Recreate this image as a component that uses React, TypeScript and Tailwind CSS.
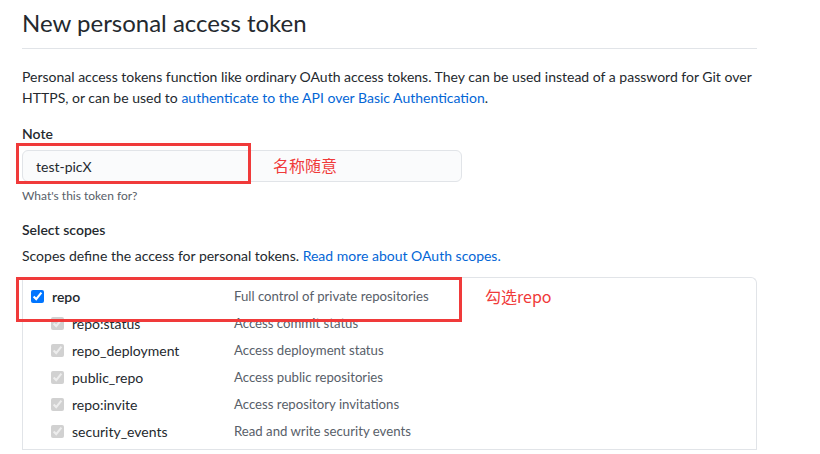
import React from "react";

type Scope = { name: string; desc: string; sub?: boolean };

const scopes: Scope[] = [
  { name: "repo", desc: "Full control of private repositories" },
  { name: "repo:status", desc: "Access commit status", sub: true },
  { name: "repo_deployment", desc: "Access deployment status", sub: true },
  { name: "public_repo", desc: "Access public repositories", sub: true },
  { name: "repo:invite", desc: "Access repository invitations", sub: true },
  { name: "security_events", desc: "Read and write security events", sub: true },
];

const ScopeRow: React.FC<{ scope: Scope }> = ({ scope }) => (
  <div className="flex items-center h-[27px]">
    <label className={`flex items-center w-[203px] ${scope.sub ? "pl-[20px]" : ""}`}>
      <input
        type="checkbox"
        checked
        readOnly
        disabled={scope.sub}
        className="m-0 w-[13px] h-[13px] mr-[8px]"
      />
      <span className={scope.sub ? "text-[#24292e]" : "font-semibold text-[#24292e]"}>
        {scope.name}
      </span>
    </label>
    <span className="text-[#586069] text-[13.2px]">{scope.desc}</span>
  </div>
);

export default function App() {
  return (
    <div
      className="relative w-[820px] h-[454px] overflow-hidden bg-white text-[14px] text-[#24292e]"
      style={{ fontFamily: '"Segoe UI", Lato, "Noto Sans CJK SC", sans-serif' }}
    >
      <div className="ml-[22px] w-[735px] flex flex-col">
        <div className="h-[49px] flex items-end border-b border-[#e1e4e8]">
          <h1 className="text-[24px] leading-[36px] font-normal mb-[7px]">
            New personal access token
          </h1>
        </div>

        <p className="mt-[17px] leading-[21px]">
          Personal access tokens function like ordinary OAuth access tokens. They can be used
          instead of a password for Git over HTTPS, or can be used to{" "}
          <a className="text-[#0366d6]">authenticate to the API over Basic Authentication</a>.
        </p>

        <div className="mt-[15px] font-semibold leading-[21px]">Note</div>
        <div className="mt-[6px] w-[440px] h-[32px] flex items-center px-[13px] bg-[#fafbfc] border border-[#e1e4e8] rounded-[6px]">
          test-picX
        </div>
        <div className="mt-[5px] text-[12px] leading-[18px] text-[#586069]">
          What's this token for?
        </div>

        <div className="mt-[14px] font-semibold leading-[21px]">Select scopes</div>
        <p className="mt-[5px] leading-[21px]">
          Scopes define the access for personal tokens.{" "}
          <a className="text-[#0366d6]">Read more about OAuth scopes.</a>
        </p>

        <div className="mt-[11px] border-l border-t border-r border-[#e1e4e8] rounded-tr-[6px] pt-[5px]">
          <div className="pb-[4px] pl-[8px] border-b border-[#e1e4e8]">
            {scopes.map((s) => (
              <ScopeRow key={s.name} scope={s} />
            ))}
          </div>
        </div>
      </div>

      {/* annotations */}
      <div className="absolute left-[16px] top-[143px] w-[235px] h-[41px] border-[3px] border-[#f03a3a]" />
      <div
        className="absolute left-[273px] top-[153px] text-[16px] leading-[24px] text-[#f03a3a]"
        style={{ fontFamily: '"Noto Sans CJK SC", sans-serif' }}
      >
        名称随意
      </div>
      <div className="absolute left-[16px] top-[277px] w-[446px] h-[45px] border-[3px] border-[#f03a3a]" />
      <div
        className="absolute left-[485px] top-[284px] text-[16px] leading-[24px] text-[#f03a3a]"
        style={{ fontFamily: '"Noto Sans CJK SC", sans-serif' }}
      >
        勾选repo
      </div>
    </div>
  );
}
